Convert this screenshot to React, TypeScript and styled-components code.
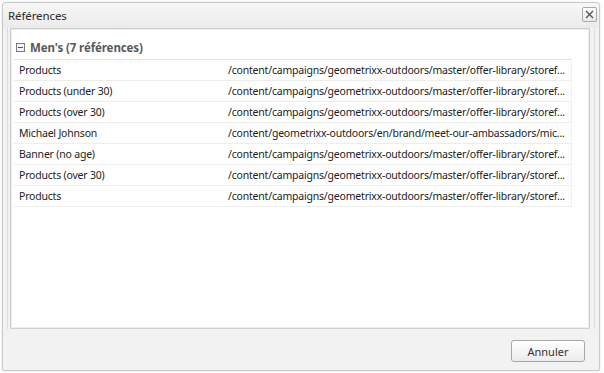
import React from "react";
import styled, { createGlobalStyle } from "styled-components";

const Global = createGlobalStyle`
  html, body { margin: 0; padding: 0; background: #ffffff; }
  body { font-family: "Noto Sans", "Open Sans", sans-serif; }
`;

const Page = styled.div`
  width: 604px;
  height: 373px;
  box-sizing: border-box;
  padding: 2px 4px 2px 2px;
`;

const Dialog = styled.div`
  height: 100%;
  box-sizing: border-box;
  border: 1px solid #c9c9c9;
  border-radius: 4px 4px 2px 2px;
  background: #f2f2f2;
  display: flex;
  flex-direction: column;
  box-shadow: 0 0 2px rgba(0, 0, 0, 0.15);
`;

const TitleBar = styled.div`
  height: 25px;
  display: flex;
  align-items: center;
  justify-content: space-between;
  padding: 0 2px 0 5px;
  background: linear-gradient(#f7f7f7, #ebebeb);
  border-radius: 4px 4px 0 0;
`;

const Title = styled.span`
  font-size: 11.5px;
  color: #2b2b2b;
  letter-spacing: -0.1px;
`;

const CloseButton = styled.button`
  width: 15px;
  height: 15px;
  padding: 0;
  margin-top: -3px;
  border: 1px solid #a9a9a9;
  border-radius: 2px;
  background: linear-gradient(#ffffff, #e9e9e9);
  display: flex;
  align-items: center;
  justify-content: center;
`;

const Body = styled.div`
  flex: 1;
  display: flex;
  flex-direction: column;
  padding: 0 4px 0 2px;
  border-left: 1px solid #dcdcdc;
  border-right: 1px solid #dcdcdc;
  margin: 0 4px;
`;

const Panel = styled.div`
  flex: 1;
  background: #ffffff;
  border: 1px solid #cfcfcf;
  box-shadow: inset 0 0 0 1px #ececec;
  padding: 10px 17px 0 3px;
`;

const GroupHeader = styled.div`
  height: 21px;
  box-sizing: border-box;
  padding: 0 0 3px 2px;
  display: flex;
  align-items: center;
  gap: 5px;
  border-bottom: 1px solid #e4e4e4;
`;

const GroupTitle = styled.span`
  font-size: 11.5px;
  font-weight: bold;
  color: #5a5a5a;
  letter-spacing: -0.1px;
`;

const Toggle = styled.span`
  width: 7px;
  height: 7px;
  border: 1px solid #7b7b7b;
  background: #f4f4f4;
  position: relative;
  &::after {
    content: "";
    position: absolute;
    left: 1px;
    right: 1px;
    top: 3px;
    height: 1px;
    background: #555;
  }
`;

const Rows = styled.div`
  display: flex;
  flex-direction: column;
`;

const Row = styled.div`
  display: grid;
  grid-template-columns: 210px 1fr;
  height: 21px;
  align-items: center;
  border-bottom: 1px solid #ededed;
  border-right: 1px solid #f0f0f0;
  box-sizing: border-box;
  font-size: 10.5px;
  letter-spacing: -0.2px;
  color: #222;
`;

const Cell = styled.div<{ $pad: number }>`
  padding-left: ${(p) => p.$pad}px;
  white-space: nowrap;
`;

const Footer = styled.div`
  height: 41px;
  display: flex;
  align-items: flex-start;
  justify-content: flex-end;
  padding: 11px 14px 0 0;
  box-sizing: border-box;
`;

const Button = styled.button`
  width: 74px;
  height: 22px;
  border: 1px solid #a8a8a8;
  border-radius: 3px;
  background: linear-gradient(#ffffff, #ececec);
  font-family: "Noto Sans", "Open Sans", sans-serif;
  font-size: 11px;
  color: #333;
  padding: 0;
`;

const rows = [
  ["Products", "/content/campaigns/geometrixx-outdoors/master/offer-library/storef..."],
  ["Products (under 30)", "/content/campaigns/geometrixx-outdoors/master/offer-library/storef..."],
  ["Products (over 30)", "/content/campaigns/geometrixx-outdoors/master/offer-library/storef..."],
  ["Michael Johnson", "/content/geometrixx-outdoors/en/brand/meet-our-ambassadors/mic..."],
  ["Banner (no age)", "/content/campaigns/geometrixx-outdoors/master/offer-library/storef..."],
  ["Products (over 30)", "/content/campaigns/geometrixx-outdoors/master/offer-library/storef..."],
  ["Products", "/content/campaigns/geometrixx-outdoors/master/offer-library/storef..."],
];

export default function App() {
  return (
    <Page>
      <Global />
      <Dialog>
        <TitleBar>
          <Title>Références</Title>
          <CloseButton aria-label="close">
            <svg width="9" height="9" viewBox="0 0 9 9">
              <path d="M1 1 L8 8 M8 1 L1 8" stroke="#555" strokeWidth="1.4" />
            </svg>
          </CloseButton>
        </TitleBar>
        <Body>
          <Panel>
            <GroupHeader>
              <Toggle />
              <GroupTitle>Men's (7 références)</GroupTitle>
            </GroupHeader>
            <Rows>
              {rows.map(([name, path], i) => (
                <Row key={i}>
                  <Cell $pad={5}>{name}</Cell>
                  <Cell $pad={4}>{path}</Cell>
                </Row>
              ))}
            </Rows>
          </Panel>
        </Body>
        <Footer>
          <Button>Annuler</Button>
        </Footer>
      </Dialog>
    </Page>
  );
}
